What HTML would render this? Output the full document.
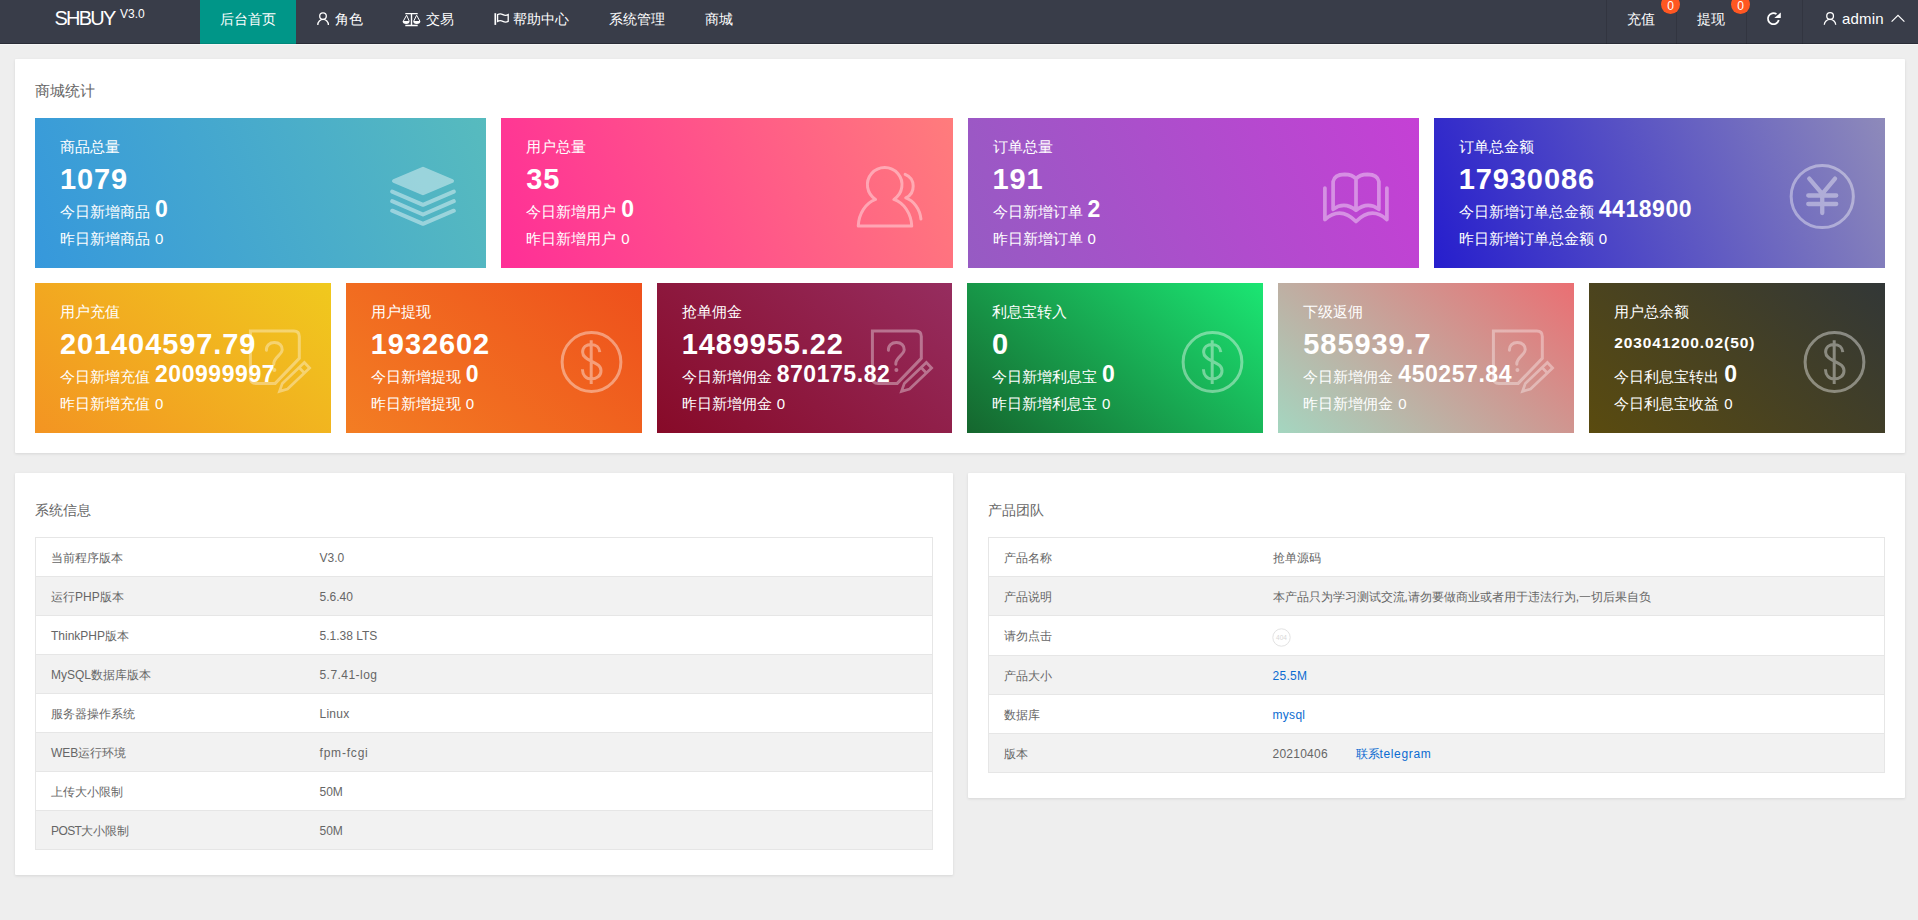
<!DOCTYPE html>
<html lang="zh">
<head>
<meta charset="utf-8">
<title>SHBUY V3.0</title>
<style>
*{box-sizing:border-box;margin:0;padding:0}
html,body{width:1918px;height:920px;overflow:hidden}
body{background:#eeeeee;font-family:"Liberation Sans",sans-serif;font-size:14px;color:#666;position:relative}
.abs{position:absolute}
/* ---------- nav ---------- */
.nav{position:absolute;left:0;top:-6px;width:1920px;height:50px;background:#393d49;border-bottom:1px solid #292c36;box-shadow:0 1px 0 #f6f6f6}
.nav .logo{position:absolute;left:0;top:0;width:200px;height:50px;color:#fff}
.nav .logo b{position:absolute;left:54.5px;top:10.4px;font-weight:normal;font-size:20px;line-height:28px;letter-spacing:-1.75px;white-space:nowrap}
.nav .logo sup{position:absolute;left:120px;top:12px;font-size:12px;line-height:16px;white-space:nowrap}
.nav .it{position:absolute;top:0;height:49px;line-height:50px;color:#fff;font-size:14px;white-space:nowrap}
.nav .it.on{background:#009688;height:50px;border-bottom:1px solid #00877a}
.nav .it span{position:absolute;top:0;white-space:nowrap}
.nav .it svg{position:absolute;overflow:visible}
.nav .sep{position:absolute;top:0;width:1px;height:50px;background:rgba(0,0,0,.12)}
.badge{position:absolute;top:1px;width:19px;height:19px;border-radius:10px;background:#ff5722;color:#fff;font-size:12px;line-height:22.5px;text-align:center;overflow:hidden}
/* ---------- panels ---------- */
.panel{position:absolute;background:#fff;box-shadow:0 1px 3px 0 rgba(0,0,0,.1);border-radius:1px}
.ttl{position:absolute;font-size:14px;line-height:20px;color:#666;white-space:nowrap}
/* ---------- stat cards ---------- */
.st{position:absolute;height:150px;color:#fff;overflow:hidden}
.st .l{position:absolute;left:25px;white-space:nowrap;font-size:15px;line-height:20px}
.st .l1{top:19px}
.st .l2{top:43px;font-size:29px;line-height:36px;font-weight:bold;letter-spacing:.9px}
.st .l3{top:81px}
.st .l4{top:111px}
.st .lab{display:inline-block;white-space:nowrap;overflow:visible;vertical-align:baseline}
.st .l3 b{font-size:23px;letter-spacing:.55px;font-weight:bold;margin-left:5px}
.st .l4 i{font-style:normal;margin-left:5px}
.st svg{position:absolute;overflow:visible}
/* ---------- tables ---------- */
.tb{position:absolute;border:1px solid #e6e6e6;border-bottom:none;font-size:12px;color:#666}
.tb .r{position:relative;height:39px;border-bottom:1px solid #e6e6e6;background:#fff}
.tb .r.e{background:#f2f2f2}
.tb .r.h40{height:40px}
.tb .r span{position:absolute;top:10px;line-height:20px;white-space:nowrap}
.tb em{font-style:normal;letter-spacing:.25px}
.tb .r .a{left:15px}
.tb .r .b{left:283.5px}
.tb a{color:#0b6cd1;text-decoration:none}
.tb u{display:inline-block;text-decoration:none;white-space:nowrap;vertical-align:baseline}
</style>
</head>
<body>

<!-- NAV -->
<div class="nav">
  <div class="logo"><b>SHBUY</b><sup>V3.0</sup></div>
  <div class="it on" style="left:200px;width:96px"><span style="left:20px">后台首页</span></div>
  <div class="it" style="left:296px;width:87px"><span style="left:39px">角色</span></div>
  <div class="it" style="left:383px;width:90px"><span style="left:43px">交易</span></div>
  <div class="it" style="left:473px;width:116px"><span style="left:40px">帮助中心</span></div>
  <div class="it" style="left:589px;width:96px"><span style="left:20px">系统管理</span></div>
  <div class="it" style="left:685px;width:68px"><span style="left:20px">商城</span></div>
  <div class="sep" style="left:1606px"></div>
  <div class="it" style="left:1607px;width:69px"><span style="left:20px">充值</span></div>
  <div class="sep" style="left:1676px"></div>
  <div class="it" style="left:1677px;width:69px"><span style="left:20px">提现</span></div>
  <div class="sep" style="left:1746px"></div>
  <div class="sep" style="left:1802px"></div>
  <div class="it" style="left:1803px;width:117px"><span style="left:39px;font-size:15px;letter-spacing:.2px">admin</span></div>
  <div class="badge" style="left:1661px">0</div>
  <div class="badge" style="left:1731px">0</div>
  <svg class="abs" style="left:0;top:0" width="1920" height="50" viewBox="0 0 1920 50" fill="none" stroke="#fff" stroke-width="1.3">
    <!-- user icon (role) -->
    <circle cx="323" cy="22.1" r="3.3"/>
    <path d="M317.8 31 A5.3 5.6 0 0 1 328.4 31"/>
    <!-- balance scale -->
    <path d="M405.3 19.6H417.7M405.3 31.5H417.7M411.5 19.6V31.5" stroke-width="1.4"/>
    <path d="M406.6 21.2L403.4 27M406.6 21.2L409.2 27M416.6 21.2L413.8 27M416.6 21.2L419.8 27" stroke-width="1"/>
    <path d="M402.6 27H409.6A3.5 2.9 0 0 1 402.6 27ZM413.2 27H420.4A3.6 2.9 0 0 1 413.2 27Z" fill="#fff" stroke="none"/>
    <!-- flag -->
    <path d="M495.3 19.2V30.9" stroke-width="1.7"/>
    <path d="M497.6 20.6Q500.2 19.2 502.9 20.6T508.2 20.6V27.4Q505.6 28.8 502.9 27.4T497.6 27.4Z" stroke-width="1.3"/>
    <!-- refresh -->
    <path d="M1778.75 26.1A5.5 5.5 0 1 1 1776.5 20.1" stroke-width="1.8"/>
    <path d="M1774.3 23.9H1780.8V18.5Z" fill="#fff" stroke="none"/>
    <!-- user icon (admin) -->
    <circle cx="1830.1" cy="22" r="3.35"/>
    <path d="M1824.3 30.8 A5.7 5.4 0 0 1 1835.7 30.8"/>
    <!-- caret -->
    <path d="M1891.6 27.6L1898 21.3L1904.4 27.6" stroke-width="1.2"/>
  </svg>
</div>

<!-- PANEL 1 -->
<div class="panel" style="left:15px;top:59px;width:1890px;height:394px"></div>
<div class="ttl" style="left:35px;top:81px;font-size:15px">商城统计</div>
<!--STATS-BEGIN-->
<div class="st" style="left:35.00px;top:118px;width:451.25px;background:linear-gradient(68deg,rgb(54,152,220),rgb(87,187,190))">
<svg width="10" height="10" style="left:0;top:0"><g opacity=".42" fill="none" stroke="#fff" stroke-linecap="round" stroke-linejoin="round">
<path d="M388 50.8L417 63L388 75.2L359 63Z" fill="#fff" stroke-width="4"/>
<path d="M357.2 73.6L388 86.8L418.8 73.6M357.2 83.2L388 96.5L418.8 83.2M357.2 92.7L388 105.8L418.8 92.7" stroke-width="4"/>
</g></svg>
<div class="l l1">商品总量</div>
<div class="l l2">1079</div>
<div class="l l3"><span class="lab" style="width:90px">今日新增商品</span><b>0</b></div>
<div class="l l4"><span class="lab" style="width:90px">昨日新增商品</span><i>0</i></div>
</div>
<div class="st" style="left:501.25px;top:118px;width:451.25px;background:linear-gradient(68deg,rgb(255,46,151),rgb(255,124,124))">
<svg width="10" height="10" style="left:0;top:0"><g opacity=".4" fill="none" stroke="#fff" stroke-linecap="round" stroke-linejoin="round" stroke-width="3">
<path d="M374.55 81.4A17.3 17.3 0 1 1 392.85 81.4C402.75 84.6 410.25 95.5 410.75 108.1H357.25C357.75 95.5 364.75 85 374.55 81.4Z"/>
<path d="M404.15 56.4A12.8 12.8 0 0 1 404.75 79.9C412.75 82.8 418.95 91 419.95 101"/>
</g></svg>
<div class="l l1">用户总量</div>
<div class="l l2">35</div>
<div class="l l3"><span class="lab" style="width:90px">今日新增用户</span><b>0</b></div>
<div class="l l4"><span class="lab" style="width:90px">昨日新增用户</span><i>0</i></div>
</div>
<div class="st" style="left:967.50px;top:118px;width:451.25px;background:linear-gradient(68deg,rgb(150,91,195),rgb(197,64,213))">
<svg width="10" height="10" style="left:0;top:0"><g opacity=".4" fill="none" stroke="#fff" stroke-linecap="round" stroke-linejoin="round" stroke-width="3.7">
<path d="M356.9 70V101.6Q372.5 87.8 388.0 103.5Q403.5 87.8 418.9 101.6V70"/>
<path d="M365.1 91.3V63.5Q366.5 56.4 376.5 56.3Q384.5 56.4 388.0 60.8Q391.5 56.4 399.5 56.3Q409.5 56.4 410.9 63.5V91.3M388.0 60.8V92M365.1 91.3Q376.5 83 388.0 92.4Q399.5 83 410.9 91.3"/>
</g></svg>
<div class="l l1">订单总量</div>
<div class="l l2">191</div>
<div class="l l3"><span class="lab" style="width:90px">今日新增订单</span><b>2</b></div>
<div class="l l4"><span class="lab" style="width:90px">昨日新增订单</span><i>0</i></div>
</div>
<div class="st" style="left:1433.75px;top:118px;width:451.25px;background:linear-gradient(68deg,rgb(38,30,205),rgb(142,138,186))">
<svg width="10" height="10" style="left:0;top:0"><g opacity=".4" fill="none" stroke="#fff" stroke-linecap="round" stroke-linejoin="round">
<circle cx="388.25" cy="78.5" r="31.1" stroke-width="3"/>
<path d="M375.25 60.6L388.25 75.8L401.05 60.6M388.25 75.8V95M374.25 77.5H402.25M374.25 86H402.25" stroke-width="4.3"/>
</g></svg>
<div class="l l1">订单总金额</div>
<div class="l l2">17930086</div>
<div class="l l3"><span class="lab" style="width:135px">今日新增订单总金额</span><b>4418900</b></div>
<div class="l l4"><span class="lab" style="width:135px">昨日新增订单总金额</span><i>0</i></div>
</div>
<div class="st" style="left:35.00px;top:283px;width:295.83px;background:linear-gradient(40deg,rgb(243,148,34),rgb(240,201,30))">
<svg width="10" height="10" style="left:0;top:0"><g opacity=".36" fill="none" stroke="#fff" stroke-linecap="round" stroke-linejoin="round" stroke-width="3">
<path d="M264.3 75.3V53.5Q264.3 48 258.8 48H215.4V95Q215.4 100.4 221 100.4H240.2Z" stroke-linejoin="miter"/>
<path d="M231.4 67.2C231.2 62.5 234.6 59.6 239.4 59.6C244.4 59.6 247.4 62.6 247.2 66.8C247 72 238.2 74.5 238.8 81.2"/>
<circle cx="239.4" cy="86.9" r="2" fill="#fff" stroke="none"/>
<g transform="translate(272 82.2) rotate(136.4)"><path d="M0 -3.8H30.5L38 0L30.5 3.8H0Z M7.3 -3.8V3.8" stroke-width="2.7" stroke-linejoin="miter"/></g>
</g></svg>
<div class="l l1">用户充值</div>
<div class="l l2">201404597.79</div>
<div class="l l3"><span class="lab" style="width:90px">今日新增充值</span><b>200999997</b></div>
<div class="l l4"><span class="lab" style="width:90px">昨日新增充值</span><i>0</i></div>
</div>
<div class="st" style="left:345.83px;top:283px;width:295.83px;background:linear-gradient(40deg,rgb(243,125,35),rgb(238,80,28))">
<svg width="10" height="10" style="left:0;top:0"><g opacity=".4" fill="none" stroke="#fff" stroke-linecap="round" stroke-linejoin="round" stroke-width="3" transform="translate(245.5 79)">
<circle cx="0" cy="0" r="29.4"/>
<path d="M8.3 -9.8C8 -14.5 4.6 -17.6 -0.2 -17.6C-5.2 -17.6 -8.9 -14.6 -8.9 -10C-8.9 -5 -4.2 -2.9 -0.2 -0.9C4.8 1.6 9.5 3.6 9.5 8.7C9.5 13.7 5.4 17 -0.2 17C-5.7 17 -8.9 13 -9.1 7.3M-0.3 -21.8V22" stroke-linecap="butt"/>
</g></svg>
<div class="l l1">用户提现</div>
<div class="l l2">1932602</div>
<div class="l l3"><span class="lab" style="width:90px">今日新增提现</span><b>0</b></div>
<div class="l l4"><span class="lab" style="width:90px">昨日新增提现</span><i>0</i></div>
</div>
<div class="st" style="left:656.67px;top:283px;width:295.83px;background:linear-gradient(40deg,rgb(135,10,40),rgb(150,45,95))">
<svg width="10" height="10" style="left:0;top:0"><g opacity=".36" fill="none" stroke="#fff" stroke-linecap="round" stroke-linejoin="round" stroke-width="3">
<path d="M264.3 75.3V53.5Q264.3 48 258.8 48H215.4V95Q215.4 100.4 221 100.4H240.2Z" stroke-linejoin="miter"/>
<path d="M231.4 67.2C231.2 62.5 234.6 59.6 239.4 59.6C244.4 59.6 247.4 62.6 247.2 66.8C247 72 238.2 74.5 238.8 81.2"/>
<circle cx="239.4" cy="86.9" r="2" fill="#fff" stroke="none"/>
<g transform="translate(272 82.2) rotate(136.4)"><path d="M0 -3.8H30.5L38 0L30.5 3.8H0Z M7.3 -3.8V3.8" stroke-width="2.7" stroke-linejoin="miter"/></g>
</g></svg>
<div class="l l1">抢单佣金</div>
<div class="l l2">1489955.22</div>
<div class="l l3"><span class="lab" style="width:90px">今日新增佣金</span><b>870175.82</b></div>
<div class="l l4"><span class="lab" style="width:90px">昨日新增佣金</span><i>0</i></div>
</div>
<div class="st" style="left:967.00px;top:283px;width:296.33px;background:linear-gradient(40deg,rgb(21,102,46),rgb(27,230,115))">
<svg width="10" height="10" style="left:0;top:0"><g opacity=".4" fill="none" stroke="#fff" stroke-linecap="round" stroke-linejoin="round" stroke-width="3" transform="translate(245.5 79)">
<circle cx="0" cy="0" r="29.4"/>
<path d="M8.3 -9.8C8 -14.5 4.6 -17.6 -0.2 -17.6C-5.2 -17.6 -8.9 -14.6 -8.9 -10C-8.9 -5 -4.2 -2.9 -0.2 -0.9C4.8 1.6 9.5 3.6 9.5 8.7C9.5 13.7 5.4 17 -0.2 17C-5.7 17 -8.9 13 -9.1 7.3M-0.3 -21.8V22" stroke-linecap="butt"/>
</g></svg>
<div class="l l1">利息宝转入</div>
<div class="l l2">0</div>
<div class="l l3"><span class="lab" style="width:105px">今日新增利息宝</span><b>0</b></div>
<div class="l l4"><span class="lab" style="width:105px">昨日新增利息宝</span><i>0</i></div>
</div>
<div class="st" style="left:1278.33px;top:283px;width:295.83px;background:linear-gradient(40deg,rgb(164,214,192),rgb(234,111,115))">
<svg width="10" height="10" style="left:0;top:0"><g opacity=".36" fill="none" stroke="#fff" stroke-linecap="round" stroke-linejoin="round" stroke-width="3">
<path d="M264.3 75.3V53.5Q264.3 48 258.8 48H215.4V95Q215.4 100.4 221 100.4H240.2Z" stroke-linejoin="miter"/>
<path d="M231.4 67.2C231.2 62.5 234.6 59.6 239.4 59.6C244.4 59.6 247.4 62.6 247.2 66.8C247 72 238.2 74.5 238.8 81.2"/>
<circle cx="239.4" cy="86.9" r="2" fill="#fff" stroke="none"/>
<g transform="translate(272 82.2) rotate(136.4)"><path d="M0 -3.8H30.5L38 0L30.5 3.8H0Z M7.3 -3.8V3.8" stroke-width="2.7" stroke-linejoin="miter"/></g>
</g></svg>
<div class="l l1">下级返佣</div>
<div class="l l2">585939.7</div>
<div class="l l3"><span class="lab" style="width:90px">今日新增佣金</span><b>450257.84</b></div>
<div class="l l4"><span class="lab" style="width:90px">昨日新增佣金</span><i>0</i></div>
</div>
<div class="st" style="left:1589.17px;top:283px;width:295.83px;background:linear-gradient(40deg,rgb(90,75,15),rgb(50,55,55))">
<svg width="10" height="10" style="left:0;top:0"><g opacity=".4" fill="none" stroke="#fff" stroke-linecap="round" stroke-linejoin="round" stroke-width="3" transform="translate(245.5 79)">
<circle cx="0" cy="0" r="29.4"/>
<path d="M8.3 -9.8C8 -14.5 4.6 -17.6 -0.2 -17.6C-5.2 -17.6 -8.9 -14.6 -8.9 -10C-8.9 -5 -4.2 -2.9 -0.2 -0.9C4.8 1.6 9.5 3.6 9.5 8.7C9.5 13.7 5.4 17 -0.2 17C-5.7 17 -8.9 13 -9.1 7.3M-0.3 -21.8V22" stroke-linecap="butt"/>
</g></svg>
<div class="l l1">用户总余额</div>
<div class="l l2" style="font-size:15.5px;letter-spacing:.9px;top:48px;line-height:24px">203041200.02(50)</div>
<div class="l l3"><span class="lab" style="width:105px">今日利息宝转出</span><b>0</b></div>
<div class="l l4"><span class="lab" style="width:105px">今日利息宝收益</span><i>0</i></div>
</div>
<!--STATS-END-->

<!-- PANEL 2 -->
<div class="panel" style="left:15px;top:473px;width:938px;height:402px"></div>
<div class="ttl" style="left:35px;top:500px">系统信息</div>
<!--TABLE1-BEGIN-->
<div class="tb" style="left:35px;top:537px;width:898px">
<div class="r"><span class="a"><u style="width:72px">当前程序版本</u></span><span class="b">V3.0</span></div>
<div class="r e"><span class="a"><u style="width:24px">运行</u>PHP<u style="width:24px">版本</u></span><span class="b">5.6.40</span></div>
<div class="r"><span class="a">ThinkPHP<u style="width:24px">版本</u></span><span class="b">5.1.38 LTS</span></div>
<div class="r e"><span class="a">MySQL<u style="width:60px">数据库版本</u></span><span class="b" style="letter-spacing:.45px">5.7.41-log</span></div>
<div class="r"><span class="a"><u style="width:84px">服务器操作系统</u></span><span class="b" style="letter-spacing:.25px">Linux</span></div>
<div class="r e"><span class="a">WEB<u style="width:48px">运行环境</u></span><span class="b" style="letter-spacing:.8px">fpm-fcgi</span></div>
<div class="r"><span class="a"><u style="width:72px">上传大小限制</u></span><span class="b">50M</span></div>
<div class="r e"><span class="a"><em style="letter-spacing:-.6px">POST</em><u style="width:48px">大小限制</u></span><span class="b">50M</span></div>
</div>
<!--TABLE1-END-->

<!-- PANEL 3 -->
<div class="panel" style="left:968px;top:473px;width:937px;height:325px"></div>
<div class="ttl" style="left:988px;top:500px">产品团队</div>
<!--TABLE2-BEGIN-->
<div class="tb" style="left:988px;top:537px;width:897px">
<div class="r"><span class="a"><u style="width:48px">产品名称</u></span><span class="b"><u style="width:48px">抢单源码</u></span></div>
<div class="r e"><span class="a"><u style="width:48px">产品说明</u></span><span class="b"><u style="width:132px">本产品只为学习测试交流</u>,<u style="width:168px">请勿要做商业或者用于违法行为</u>,<u style="width:72px">一切后果自负</u></span></div>
<div class="r h40"><span class="a"><u style="width:48px">请勿点击</u></span><span class="b"><svg width="19" height="19" style="position:absolute;left:-0.7px;top:1.8px" viewBox="0 0 19 19"><circle cx="9.5" cy="9.5" r="8.7" fill="#fff" stroke="#e2e2e2" stroke-width="1"/><text x="9.5" y="12" font-family="Liberation Sans, sans-serif" font-size="6.5" fill="#d8d8d8" text-anchor="middle">404</text></svg></span></div>
<div class="r e"><span class="a"><u style="width:48px">产品大小</u></span><span class="b"><a style="letter-spacing:.3px">25.5M</a></span></div>
<div class="r"><span class="a"><u style="width:36px">数据库</u></span><span class="b"><a style="letter-spacing:.3px">mysql</a></span></div>
<div class="r e"><span class="a"><u style="width:24px">版本</u></span><span class="b"><em>20210406</em><a style="position:absolute;left:83px;top:0;letter-spacing:.65px"><u style="width:24px">联系</u>telegram</a></span></div>
</div>
<!--TABLE2-END-->

</body>
</html>
